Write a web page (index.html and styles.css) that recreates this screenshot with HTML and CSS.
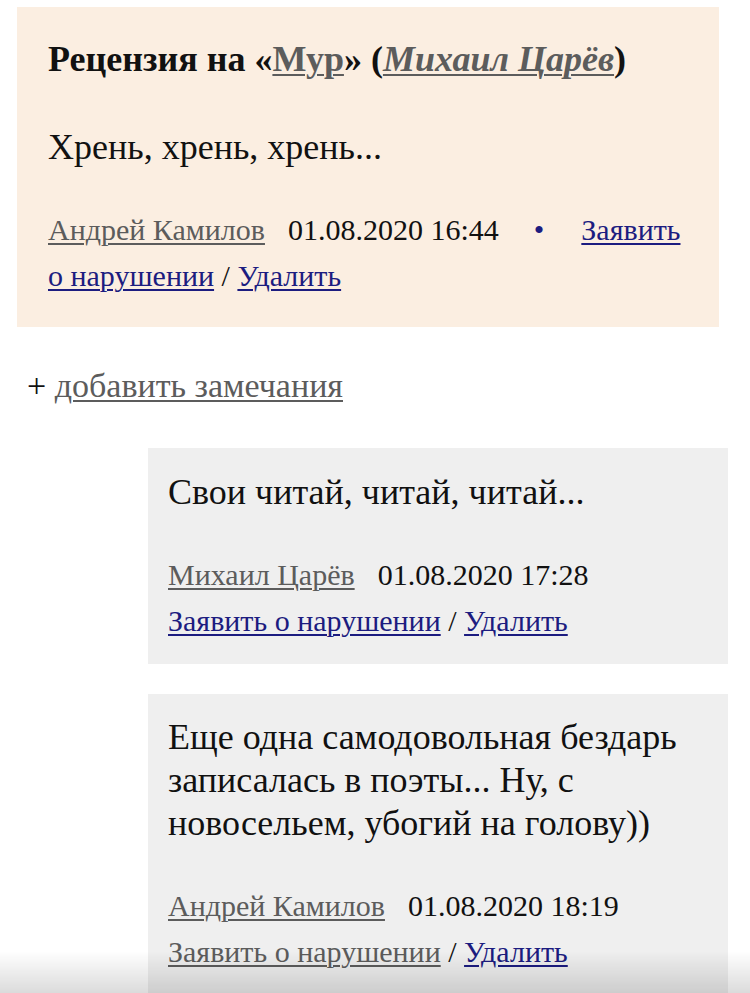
FILE: index.html
```html
<!DOCTYPE html>
<html lang="ru">
<head>
<meta charset="utf-8">
<link rel="stylesheet" href="styles.css">
</head>
<body>
<div class="review">
  <h1 class="review-title">Рецензия на «<a class="lnk-grey" href="#">Мур</a>» (<a class="lnk-grey" href="#"><em>Михаил Царёв</em></a>)</h1>
  <p class="text">Хрень, хрень, хрень...</p>
  <p class="meta"><a class="lnk-grey" href="#">Андрей Камилов</a><span class="date">01.08.2020 16:44</span><span class="dot">•</span><a class="lnk-blue action" href="#">Заявить о нарушении</a> / <a class="lnk-blue" href="#">Удалить</a></p>
</div>
<p class="add">+ <a class="lnk-grey" href="#">добавить замечания</a></p>
<div class="comment">
  <p class="text">Свои читай, читай, читай...</p>
  <p class="meta"><a class="lnk-grey" href="#">Михаил Царёв</a><span class="date">01.08.2020 17:28</span><br><a class="lnk-blue" href="#">Заявить о нарушении</a> / <a class="lnk-blue" href="#">Удалить</a></p>
</div>
<div class="comment">
  <p class="text">Еще одна самодовольная бездарь записалась в поэты... Ну, с новосельем, убогий на голову))</p>
  <p class="meta"><a class="lnk-grey" href="#">Андрей Камилов</a><span class="date">01.08.2020 18:19</span><br><a class="lnk-grey" href="#">Заявить о нарушении</a> / <a class="lnk-blue" href="#">Удалить</a></p>
</div>
<div class="shade"></div>
</body>
</html>
```
FILE: styles.css
```css
html, body {
  margin: 0;
  padding: 0;
  background: #ffffff;
}
body {
  font-family: "Liberation Serif", "Times New Roman", serif;
  color: #111111;
  width: 750px;
  height: 993px;
  overflow: hidden;
}
p, h1 { margin: 0; }
a {
  text-decoration: underline;
  text-underline-offset: 3px;
  text-decoration-thickness: 2px;
}
.lnk-grey { color: #5c5c5c; }
.lnk-blue { color: #1c1c80; }
.date { margin-left: 23px; }
.dot {
  color: #1c1c80;
  margin-left: 35px;
  margin-right: 37px;
}

.review {
  background: #fbeee1;
  margin: 7px 31px 0 17px;
  padding: 31px 30px 28px 31px;
}
.review-title {
  font-size: 36px;
  line-height: 43px;
  font-weight: bold;
}
.text {
  font-size: 36px;
  line-height: 43px;
}
.review .text { margin-top: 45px; }
.meta {
  font-size: 30px;
  line-height: 46px;
  margin-top: 38px;
}
.add {
  font-size: 34px;
  line-height: 46px;
  margin: 36px 0 0 27px;
}
.comment {
  background: #efefef;
  margin: 39px 22px 0 148px;
  padding: 23px 20px 20px 20px;
}
.comment + .comment {
  margin-top: 30px;
  padding-top: 22px;
}
.shade {
  position: fixed;
  left: 0;
  right: 0;
  bottom: 0;
  height: 42px;
  background: linear-gradient(to bottom, rgba(0,0,0,0), rgba(0,0,0,0.14));
}
```
